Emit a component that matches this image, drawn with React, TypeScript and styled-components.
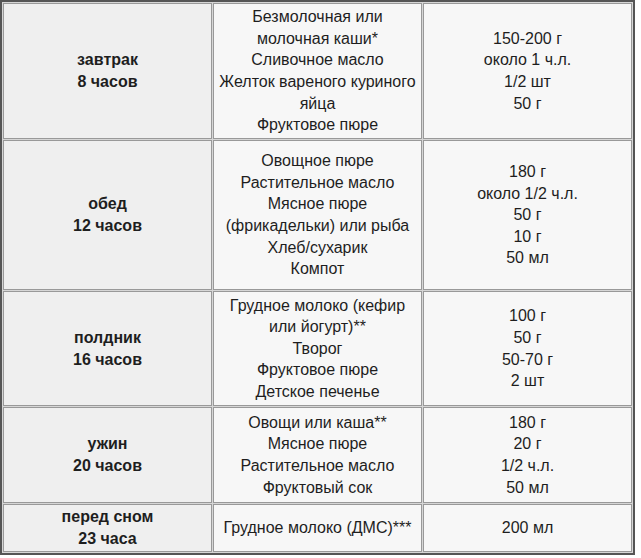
import styled, { createGlobalStyle } from 'styled-components';

const GlobalStyle = createGlobalStyle`
  body {
    margin: 0;
    background: #fff;
    font-family: 'Liberation Sans', Arial, sans-serif;
  }
`;

const Table = styled.div`
  display: inline-grid;
  grid-template-columns: 209px 209px 209px;
  grid-template-rows: 136px 150px 115px 96px 48px;
  gap: 1px;
  padding: 1px;
  border: 2px solid #555;
  background: #fff;
`;

const Cell = styled.div<{ $head?: boolean }>`
  display: flex;
  flex-direction: column;
  justify-content: center;
  align-items: center;
  text-align: center;
  padding: 0 2px;
  border: 1px solid #999;
  outline: 1px solid #d6d6d6;
  background: ${(p) => (p.$head ? '#efefef' : '#f7f7f7')};
  color: #1e1e1e;
  font-size: 16px;
  line-height: 21.6px;
  font-weight: ${(p) => (p.$head ? 700 : 400)};
`;

const Line = styled.div``;

const rows = [
  {
    meal: ['завтрак', '8 часов'],
    food: ['Безмолочная или молочная каши*', 'Сливочное масло', 'Желток вареного куриного яйца', 'Фруктовое пюре'],
    amount: ['150-200 г', 'около 1 ч.л.', '1/2 шт', '50 г'],
  },
  {
    meal: ['обед', '12 часов'],
    food: ['Овощное пюре', 'Растительное масло', 'Мясное пюре (фрикадельки) или рыба', 'Хлеб/сухарик', 'Компот'],
    amount: ['180 г', 'около 1/2 ч.л.', '50 г', '10 г', '50 мл'],
  },
  {
    meal: ['полдник', '16 часов'],
    food: ['Грудное молоко (кефир или йогурт)**', 'Творог', 'Фруктовое пюре', 'Детское печенье'],
    amount: ['100 г', '50 г', '50-70 г', '2 шт'],
  },
  {
    meal: ['ужин', '20 часов'],
    food: ['Овощи или каша**', 'Мясное пюре', 'Растительное масло', 'Фруктовый сок'],
    amount: ['180 г', '20 г', '1/2 ч.л.', '50 мл'],
  },
  {
    meal: ['перед сном', '23 часа'],
    food: ['Грудное молоко (ДМС)***'],
    amount: ['200 мл'],
  },
];

export default function App() {
  return (
    <>
      <GlobalStyle />
      <Table>
        {rows.map((r) => (
          <>
            <Cell $head key={r.meal[0]}>
              {r.meal.map((t) => (
                <Line key={t}>{t}</Line>
              ))}
            </Cell>
            <Cell key={r.meal[0] + 'f'}>
              {r.food.map((t) => (
                <Line key={t}>{t}</Line>
              ))}
            </Cell>
            <Cell key={r.meal[0] + 'a'}>
              {r.amount.map((t) => (
                <Line key={t}>{t}</Line>
              ))}
            </Cell>
          </>
        ))}
      </Table>
    </>
  );
}
